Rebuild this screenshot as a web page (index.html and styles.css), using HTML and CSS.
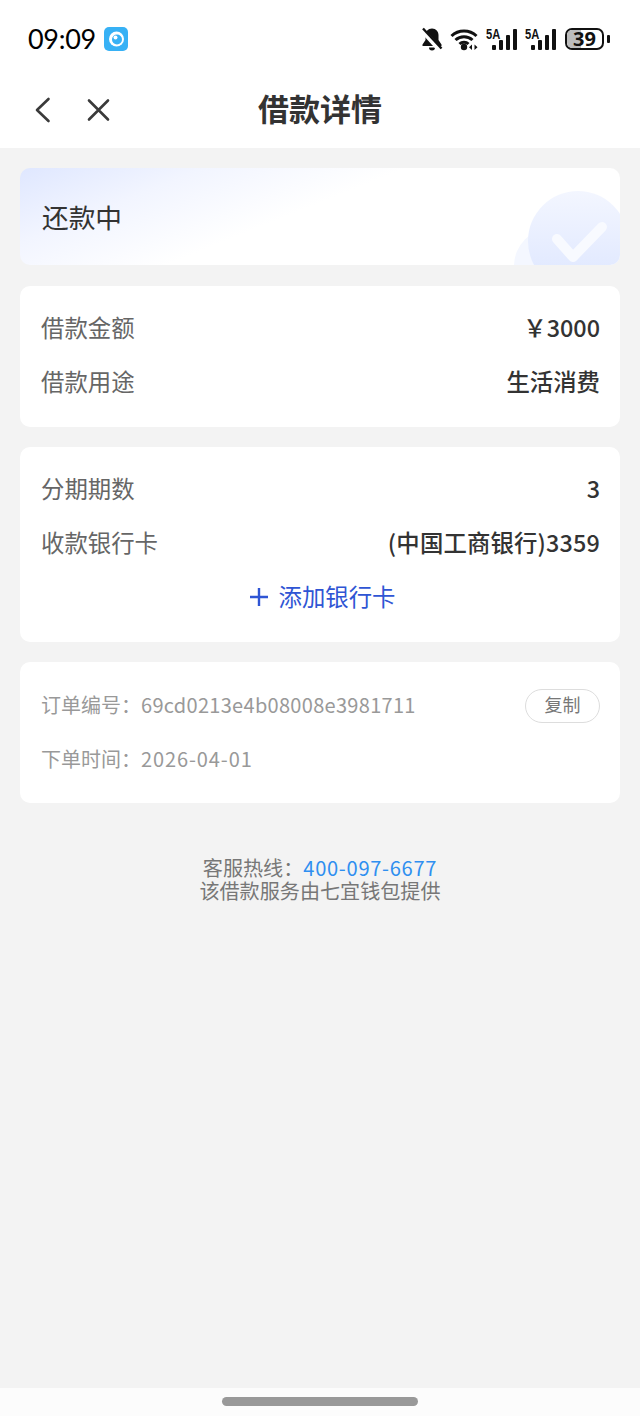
FILE: index.html
```html
<!DOCTYPE html>
<html lang="zh-CN">
<head>
<meta charset="utf-8">
<title>借款详情</title>
<link rel="stylesheet" href="styles.css">
</head>
<body>
<div class="page">
  <header class="top">
    <div class="status">
      <div class="status-left">
        <span class="time">09:09</span>
        <svg class="app-icon" width="24" height="24" viewBox="0 0 24 24"><rect width="24" height="24" rx="5" fill="#37b1f5"/><circle cx="12.500" cy="12" r="7.500" fill="#fff"/><circle cx="13" cy="12.500" r="5" fill="#37b1f5"/><circle cx="11.500" cy="10.500" r="2" fill="#fff"/></svg>
      </div>
      <div class="status-right">
        <svg class="bell" width="22" height="24" viewBox="0 0 22 24"><path d="M11 1.500C7 1.500 4.500 4.500 4.500 8v5L1.500 17.500V19h19v-1.500L17.500 13V8c0-3.500-2.500-6.500-6.500-6.500z" fill="#111"/><path d="M8 20.500h6a3 3 0 0 1-6 0z" fill="#111"/><path d="M0 2l19 21" stroke="#fff" stroke-width="5"/><path d="M2 1.500l18.500 20" stroke="#111" stroke-width="2.400"/></svg>
        <svg class="wifi" width="30" height="24" viewBox="0 0 30 24"><path d="M1.500 9a18 18 0 0 1 25 0M5.500 13a12.500 12.500 0 0 1 17 0M9.500 17a6.500 6.500 0 0 1 9 0" fill="none" stroke="#111" stroke-width="3"/><circle cx="14" cy="20" r="3.200" fill="#111"/><path d="M22 17.500l-3 2.800 3 2.800zM24.500 17.500l3 2.800-3 2.800z" fill="#111"/></svg>
        <div class="signal"><span class="net">5A</span><svg width="32" height="24" viewBox="0 0 32 24"><g fill="#111"><rect x="5" y="18" width="4" height="5" rx="1"/><rect x="12" y="13" width="4" height="10" rx="1"/><rect x="19" y="8" width="4" height="15" rx="1"/><rect x="26" y="2" width="4" height="21" rx="1"/></g></svg></div>
        <div class="signal"><span class="net">5A</span><svg width="32" height="24" viewBox="0 0 32 24"><g fill="#111"><rect x="5" y="18" width="4" height="5" rx="1"/><rect x="12" y="13" width="4" height="10" rx="1"/><rect x="19" y="8" width="4" height="15" rx="1"/><rect x="26" y="2" width="4" height="21" rx="1"/></g></svg></div>
        <div class="battery"><div class="battery-body"><span class="battery-fill"></span><span class="battery-num">39</span></div><span class="battery-tip"></span></div>
      </div>
    </div>
    <nav class="nav">
      <div class="nav-icons">
        <svg width="18" height="26" viewBox="0 0 18 26"><path d="M14.500 2L3 13l11.500 11" fill="none" stroke="#3a3a3a" stroke-width="2.600" stroke-linecap="round" stroke-linejoin="round"/></svg>
        <svg width="26" height="26" viewBox="0 0 26 26"><path d="M4 3.500l19 19M23 3.500l-19 19" fill="none" stroke="#3a3a3a" stroke-width="2.600" stroke-linecap="round"/></svg>
      </div>
      <h1 class="title">借款详情</h1>
    </nav>
  </header>

  <main class="content">
    <section class="card state">
      <span class="state-text">还款中</span>
      <svg class="state-art" width="106" height="97" viewBox="0 0 106 97"><defs><linearGradient id="g" x1="0" y1="0" x2="0" y2="1"><stop offset="0" stop-color="#f3f6ff"/><stop offset="1" stop-color="#dde6ff"/></linearGradient></defs><circle cx="38" cy="98" r="38" fill="#f4f7ff"/><circle cx="64" cy="73" r="50" fill="url(#g)"/><path d="M43 71l16 18 29-30" fill="none" stroke="#f8faff" stroke-width="10" stroke-linecap="round" stroke-linejoin="round"/></svg>
    </section>

    <section class="card info">
      <div class="row"><span class="label">借款金额</span><span class="value">￥3000</span></div>
      <div class="row"><span class="label">借款用途</span><span class="value">生活消费</span></div>
    </section>

    <section class="card info">
      <div class="row"><span class="label">分期期数</span><span class="value">3</span></div>
      <div class="row"><span class="label">收款银行卡</span><span class="value bank">(中国工商银行)3359</span></div>
      <div class="add-card">
        <svg width="20" height="20" viewBox="0 0 20 20"><path d="M10 1v18M1 10h18" stroke="#2f55d4" stroke-width="2.400"/></svg>
        <span class="add-text">添加银行卡</span>
      </div>
    </section>

    <section class="card order">
      <div class="order-row"><span class="order-text">订单编号：<span class="order-no">69cd0213e4b08008e3981711</span></span><button class="copy">复制</button></div>
      <div class="order-row"><span class="order-text">下单时间：<span class="order-date">2026-04-01</span></span></div>
    </section>

    <footer class="service">
      <div>客服热线：<span class="phone">400-097-6677</span></div>
      <div>该借款服务由七宜钱包提供</div>
    </footer>
  </main>

  <div class="home-bar"><span class="home-pill"></span></div>
</div>
</body>
</html>
```

FILE: styles.css
```css
* { box-sizing: border-box; }
html, body { margin: 0; padding: 0; }
body {
  width: 640px;
  height: 1416px;
  background: #f3f3f3;
  font-family: "Noto Sans CJK SC", "Noto Sans", sans-serif;
  overflow: hidden;
}
.page { height: 1416px; display: flex; flex-direction: column; }
.top { background: #fff; height: 148px; flex: none; }
.status {
  height: 78px;
  padding: 0 30px 0 28px;
  display: flex;
  align-items: center;
  justify-content: space-between;
}
.status-left { display: flex; align-items: center; gap: 8px; }
.time { font-family: Lato, "Noto Sans", sans-serif; font-size: 27px; color: #000; letter-spacing: -0.3px; line-height: 32px; }
.status-right { display: flex; align-items: center; gap: 7px; }
.signal { position: relative; width: 32px; height: 24px; }
.signal svg { display: block; }
.net {
  position: absolute;
  left: -1px; top: 0;
  font: 700 14px/14px "Liberation Sans", sans-serif;
  color: #111;
  transform: scaleX(.8);
  transform-origin: left top;
}
.battery { display: flex; align-items: center; gap: 3px; }
.battery-body {
  position: relative;
  width: 39px;
  height: 22px;
  border: 2px solid #111;
  border-radius: 7px;
  display: flex;
  align-items: center;
  justify-content: center;
}
.battery-fill { position: absolute; left: 0; top: 0; bottom: 0; width: 39%; background: #bdbdbd; border-radius: 5px 0 0 5px; }
.battery-num { position: relative; font: 700 20px/18px "Noto Sans", sans-serif; color: #111; }
.battery-tip { width: 3px; height: 8px; background: #111; border-radius: 1px; }
.nav { position: relative; height: 70px; display: flex; align-items: center; justify-content: center; }
.nav-icons { position: absolute; left: 34px; top: 19px; display: flex; align-items: center; gap: 33px; }
.nav-icons svg { display: block; }
.title { margin: 0 0 10px; font-size: 31px; line-height: 40px; font-weight: 700; color: #333; }
.content { flex: 1; padding: 20px 20px 0; display: flex; flex-direction: column; gap: 20px; }
.card { background: #fff; border-radius: 10px; }
.state {
  position: relative;
  height: 97px;
  margin-bottom: 1px;
  overflow: hidden;
  display: flex;
  align-items: center;
  padding-left: 22px;
  background: linear-gradient(158deg, #dfe7ff 0%, #f2f5ff 22%, #fff 46%);
}
.state-text { font-size: 26.700px; line-height: 36px; color: #333; }
.state-art { position: absolute; right: 0; top: 0; }
.info { padding: 16px 20px 17px 21px; }
.row { height: 54px; display: flex; align-items: center; justify-content: space-between; }
.label { font-size: 23.400px; color: #666; line-height: 32px; margin-bottom: 4px; }
.value { font-size: 23.400px; color: #333; line-height: 32px; font-weight: 500; margin-bottom: 4px; }
.bank { letter-spacing: .15px; }
.add-card {
  height: 54px;
  padding-left: 3px;
  display: flex;
  align-items: center;
  justify-content: center;
  gap: 10px;
  font-size: 23.400px;
  color: #2f55d4;
}
.add-text { margin-bottom: 4px; }
.add-card svg { display: block; margin-bottom: 2px; }
.order { height: 141px; padding: 17px 20px 0 21px; color: #999; font-size: 20px; }
.order-row { height: 54px; display: flex; align-items: center; justify-content: space-between; }
.order-text { margin-bottom: 4px; }
.order-no { letter-spacing: .3px; }
.order-date { letter-spacing: .9px; }
.copy {
  width: 75px;
  height: 34px;
  padding: 0 0 4px;
  border: 1px solid #ddd;
  border-radius: 17px;
  background: #fff;
  color: #777;
  font: 400 18px/26px "Noto Sans CJK SC", sans-serif;
}
.service { margin-top: 33px; text-align: center; font-size: 20.100px; line-height: 23px; color: #777; }
.phone { color: #2f8ff0; letter-spacing: .7px; }
.home-bar { flex: none; height: 28px; background: #fcfcfc; display: flex; justify-content: center; padding-top: 9px; }
.home-pill { width: 196px; height: 9px; border-radius: 5px; background: #999; }
```
